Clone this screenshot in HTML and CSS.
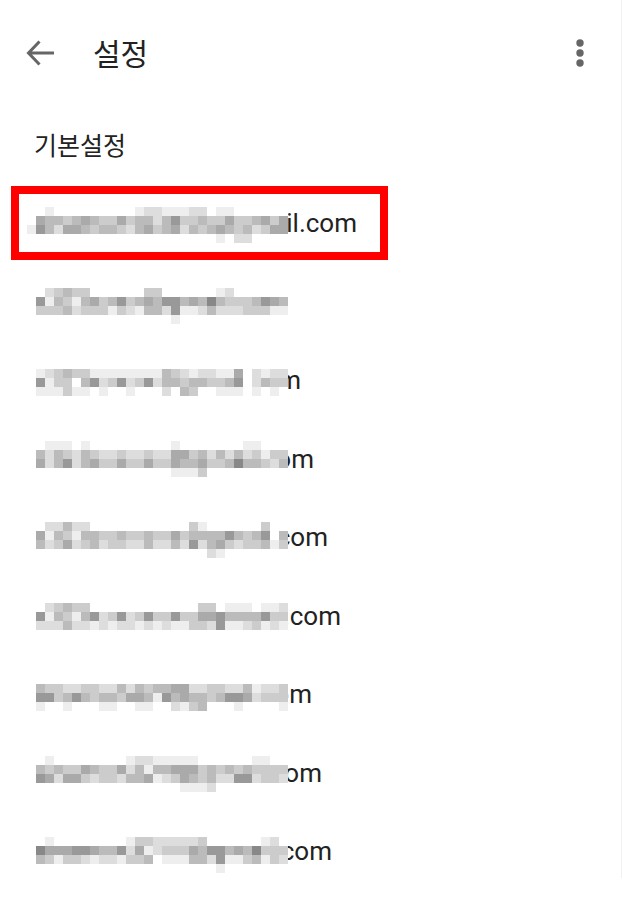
FILE: index.html
```html
<!DOCTYPE html>
<html lang="ko">
  <head>
    <meta charset="utf-8">
    <title>설정</title>
    <link rel="stylesheet" href="styles.css">
  </head>
  <body>
    <div class="page">
      <header class="app-bar">
        <svg class="back-icon" viewBox="0 0 32 32" width="32" height="32">
          <path d="M30 16H5M15.5 4.500 4.500 16l11 11.500"></path>
        </svg>
        <h1 class="title">설정</h1>
        <svg class="more-icon" viewBox="0 0 12 32" width="12" height="32">
          <circle cx="6" cy="6" r="3.700"></circle>
          <circle cx="6" cy="16" r="3.700"></circle>
          <circle cx="6" cy="26" r="3.700"></circle>
        </svg>
      </header>
      <div class="section-label">기본설정</div>
      <ul class="account-list" id="accounts"></ul>
      <div class="highlight"></div>
    </div>
    <script src="app.js"></script>
  </body>
</html>
```

FILE: styles.css
```css
/* General Styling */
* {
  box-sizing: border-box;
}

body {
  margin: 0;
  background-color: white;
  color: #222;
  font-family: Roboto, "Noto Sans CJK KR", sans-serif;
}

.page {
  position: relative;
  width: 622px;
  height: 878px;
  border-right: 1px solid #f2f2f2;
}

/* App Bar */
.app-bar {
  display: flex;
  align-items: center;
  height: 106px;
  padding: 0 35px 0 24px;
}

.back-icon path {
  fill: none;
  stroke: #666;
  stroke-width: 3;
}

.more-icon {
  margin-left: auto;
  fill: #666;
}

.title {
  margin: 0 0 2px 37px;
  font-family: "Noto Sans CJK KR", sans-serif;
  font-size: 30px;
  font-weight: 400;
  color: #222;
}

/* Section Label */
.section-label {
  display: flex;
  align-items: center;
  height: 79px;
  padding: 0 0 4px 34px;
  font-family: "Noto Sans CJK KR", sans-serif;
  font-size: 25px;
}

/* Accounts */
.account-list {
  margin: 0;
  padding: 0;
  list-style: none;
}

.account {
  display: flex;
  align-items: center;
  height: 78.5px;
  padding: 0 0 2px 27px;
}

.email {
  font-size: 26px;
  text-align: right;
  white-space: nowrap;
}

/* Blurred part of each address, lies over the text */
.mosaic {
  position: absolute;
  left: 27px;
  display: grid;
  grid-template-columns: repeat(29, 9px);
  grid-auto-rows: 9px;
}

/* Red annotation round the first account */
.highlight {
  position: absolute;
  left: 11px;
  top: 186px;
  width: 377px;
  height: 74px;
  border: 8px solid #ff0000;
}
```

FILE: app.js
```js
// end = x where the visible text stops, top = y of the blur block
// each blur row is 29 cells, one hex digit of grey per cell
const accounts = [
  {
    end: 357,
    top: 207,
    rows: [
      "ffefffffffffeddeeeddfeeffffff",
      "fabbcbabccacbbdb9ccbccaccbaca",
      "e9bdaabcbbcdbacbadbcbabcbdcaa",
      "fffffffffffffffffffffefddffff",
    ],
  },
  {
    end: 289,
    top: 288,
    rows: [
      "ffdcbccffffffccffffffedffffff",
      "f9ebcebacb9cbab99bab8bcccb9ab",
      "fcccbdcccecdebbd9eedbdddcccee",
      "ffffffffffffffffeffffffffffff",
    ],
  },
  {
    end: 301,
    top: 369,
    rows: [
      "fedcbcceeeeeeeebcdeddeeafdedd",
      "f9eccfb9dc9dc9dbbcbbccb9fdbcc",
      "feeeceefeffefffdfbcffeeefefef",
    ],
  },
  {
    end: 314,
    top: 441,
    rows: [
      "ffeeefefffffffffefffffffeefff",
      "fbdbcdbcddcddcddaacbdbdbdcecc",
      "fadb9dbaccaccaccabbaccb8bbcdb",
      "ffffffffffffffffeeecfffffffff",
    ],
  },
  {
    end: 328,
    top: 522,
    rows: [
      "ffddbddfffffffffffceffffffcff",
      "faebcebbccbccbccacbbbb9bcb9fb",
      "fbdcadcbdccddbddbd9dbacdccbec",
      "ffffffffffffffffffffdefffffff",
    ],
  },
  {
    end: 341,
    top: 603,
    rows: [
      "ffdcbccffffffffffffccfeeefeed",
      "f9ebceb9dc9dc9cc9ccaa9bbbb9cc",
      "fdddbddededdededeeccd9eedcede",
    ],
  },
  {
    end: 312,
    top: 684,
    rows: [
      "fbccddccddbdbcbbaaddccddbeddc",
      "f99cb9bcbbcaabe9babbcb99adccc",
      "feffefffeeffeeffdecbfffeffffe",
    ],
  },
  {
    end: 322,
    top: 756,
    rows: [
      "ffeffffffffeddeeeeeffffffeeff",
      "fbcbccabccadbebbaaacbcbcbcccc",
      "f9adaacdccdbbaedcabcbdd99dccd",
      "fffffffffffffffffeeedffffffff",
    ],
  },
  {
    end: 332,
    top: 837,
    rows: [
      "ffeffffffffeccdddddcffffffedf",
      "f8aaa99abb9daedcccab99bab8ccc",
      "fbceccdeddeccbfeeebbd9eecbecd",
      "fffffffffffffffffffffefffffff",
    ],
  },
];

const list = document.getElementById("accounts");

for (let account of accounts) {
  const item = document.createElement("li");
  item.className = "account";

  const email = document.createElement("span");
  email.className = "email";
  email.style.width = account.end - 27 + "px";
  email.innerText = "gmail.com";
  item.appendChild(email);

  const mosaic = document.createElement("div");
  mosaic.className = "mosaic";
  mosaic.style.top = account.top + "px";
  for (let row of account.rows) {
    for (let c of row) {
      const cell = document.createElement("span");
      cell.style.backgroundColor = "#" + c + c + c;
      mosaic.appendChild(cell);
    }
  }
  item.appendChild(mosaic);

  list.appendChild(item);
}
```
